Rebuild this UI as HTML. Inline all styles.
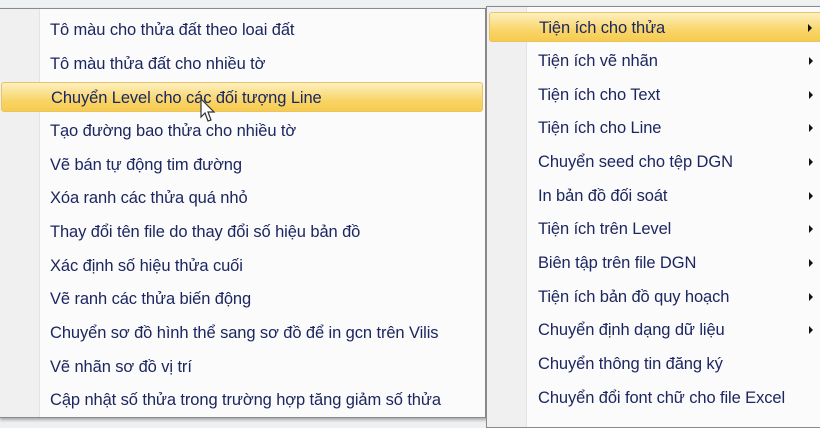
<!DOCTYPE html>
<html><head><meta charset="utf-8"><style>
body{margin:0;width:820px;height:419px;overflow:hidden;background:#eef0f2;font-family:"Liberation Sans",sans-serif;position:relative}
.m{position:absolute;background:#fbfbfb;border:1px solid #8a8a8a;box-shadow:2px 2px 3px rgba(0,0,0,.3)}
.g{position:absolute;top:0;bottom:0;left:0;background:#f0f0f0;border-right:1px solid #e2e3e3}
.it{position:absolute;left:0;right:0;height:30px;line-height:30px;font-size:16.5px;color:#1c2660;letter-spacing:-0.1px;white-space:nowrap}
.hl{background:linear-gradient(#fdf0c0,#f9d66a 60%,#f6cb4e);border:1px solid #e7c565;border-radius:3px;box-sizing:border-box}
.ar{position:absolute;right:10px;top:11px;width:0;height:0;border-left:4px solid #111;border-top:4px solid transparent;border-bottom:4px solid transparent}
</style></head><body>
<div class="m" style="left:-2px;top:8px;width:486px;height:408px">
<div class="g" style="width:40px"></div>
<div class="it" style="top:6px;left:51px">Tô màu cho thửa đất theo loai đất</div>
<div class="it" style="top:40px;left:51px">Tô màu thửa đất cho nhiều tờ</div>
<div class="it hl" style="top:73px;left:2px;right:2px;padding-left:49px">Chuyển Level cho các đối tượng Line</div>
<div class="it" style="top:107px;left:51px">Tạo đường bao thửa cho nhiều tờ</div>
<div class="it" style="top:141px;left:51px">Vẽ bán tự động tim đường</div>
<div class="it" style="top:174px;left:51px">Xóa ranh các thửa quá nhỏ</div>
<div class="it" style="top:208px;left:51px">Thay đổi tên file do thay đổi số hiệu bản đồ</div>
<div class="it" style="top:242px;left:51px">Xác định số hiệu thửa cuối</div>
<div class="it" style="top:275px;left:51px">Vẽ ranh các thửa biến động</div>
<div class="it" style="top:309px;left:51px">Chuyển sơ đồ hình thể sang sơ đồ để in gcn trên Vilis</div>
<div class="it" style="top:343px;left:51px">Vẽ nhãn sơ đồ vị trí</div>
<div class="it" style="top:376px;left:51px">Cập nhật số thửa trong trường hợp tăng giảm số thửa</div>
</div>
<svg style="position:absolute;left:200px;top:98px" width="20" height="26" viewBox="0 0 20 26"><path d="M1 1 L1 19 L5 15 L8 23 L11 22 L8 14 L14 14 Z" fill="#fff" stroke="#333" stroke-width="1.2"/></svg>
<div class="m" style="left:486px;top:6px;width:340px;height:420px">
<div class="g" style="width:39px"></div>
<div class="it hl" style="top:5px;left:2px;right:4px;padding-left:49px">Tiện ích cho thửa<span class="ar"></span></div>
<div class="it" style="top:39px;left:51px;right:4px">Tiện ích vẽ nhãn<span class="ar"></span></div>
<div class="it" style="top:73px;left:51px;right:4px">Tiện ích cho Text<span class="ar"></span></div>
<div class="it" style="top:106px;left:51px;right:4px">Tiện ích cho Line<span class="ar"></span></div>
<div class="it" style="top:140px;left:51px;right:4px">Chuyển seed cho tệp DGN<span class="ar"></span></div>
<div class="it" style="top:174px;left:51px;right:4px">In bản đồ đối soát<span class="ar"></span></div>
<div class="it" style="top:207px;left:51px;right:4px">Tiện ích trên Level<span class="ar"></span></div>
<div class="it" style="top:241px;left:51px;right:4px">Biên tập trên file DGN<span class="ar"></span></div>
<div class="it" style="top:275px;left:51px;right:4px">Tiện ích bản đồ quy hoạch<span class="ar"></span></div>
<div class="it" style="top:308px;left:51px;right:4px">Chuyển định dạng dữ liệu<span class="ar"></span></div>
<div class="it" style="top:342px;left:51px;right:4px">Chuyển thông tin đăng ký</div>
<div class="it" style="top:376px;left:51px;right:4px">Chuyển đổi font chữ cho file Excel</div>
</div>
</body></html>
